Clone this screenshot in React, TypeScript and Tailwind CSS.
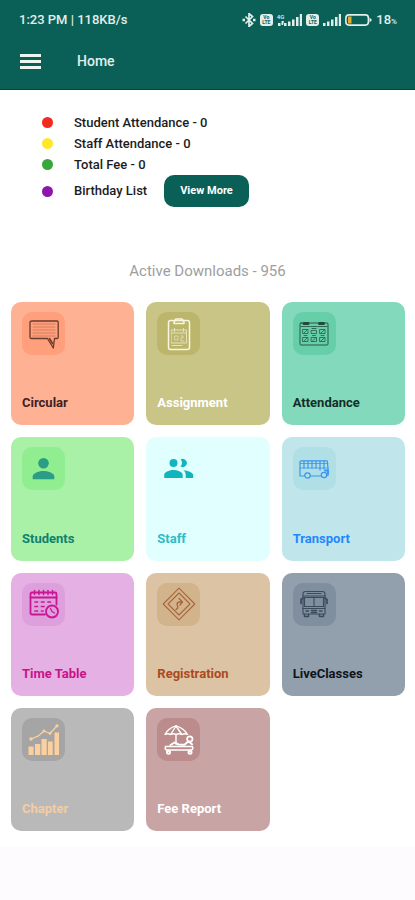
import type { ReactNode } from 'react';

const line = {
  fill: 'none',
  stroke: 'currentColor',
  strokeLinecap: 'round',
  strokeLinejoin: 'round',
} as const;

function Icon({ children, width = 1 }: { children: ReactNode; width?: number }) {
  return (
    <svg viewBox="0 0 30 30" className="size-[30px] overflow-visible" aria-hidden="true" {...line} strokeWidth={width}>
      {children}
    </svg>
  );
}

const circularIcon = (
  <Icon>
    <path d="M3 2h25q1.200 0 1.200 1.200v15q0 1.300-1.200 1.300h-2.500l-1.200 9.500-5.800-9.500H2.500Q1 19.500 1 18V3.500Q1 2 3 2z" strokeWidth="1.300" />
    <path d="M4 5h22M4 8h22M4 11h22M4 14h22M4 17h22" strokeWidth=".5" opacity=".6" />
    <path d="M20.500 19.500l3 5" strokeWidth="1.500" />
  </Icon>
);

const assignmentIcon = (
  <Icon width={1.5}>
    <rect x="4.500" y="1.500" width="21" height="29" rx="2" />
    <path d="M10 3L12 0h6l2 3v1.500H10z" />
    <g opacity=".7">
      <path d="M7.500 11h15v13h-15zM7.500 14h15M10.500 9.500v3M19.500 9.500v3" strokeWidth="1" />
      <path d="M11 17h3v4h-3zM17 17h2v2h-2v3h3" strokeWidth=".8" />
      <path d="M8 26.500h10" strokeWidth="1" />
    </g>
  </Icon>
);

const attendanceIcon = (
  <Icon width={0.9}>
    <rect x="1" y="4" width="28" height="22" rx="1" />
    <path d="M5 4.500h4M20.500 4.500h4" strokeWidth="3" />
    <path d="M2 7.500h9M19 7.500h9M12 7.500h6M13 9.500h4" strokeWidth=".8" />
    <path
      d="M4 10.500h5v4H4zM4 18.500h5v4H4zM12.500 11.500h5v3h-5zM12.500 18.500h5v4h-5zM21 10.500h5v4h-5zM21 18.500h5v4h-5zM5 14l3-3M5 22l3-3M13.500 22l3-3M22 14l3-3M22 22l3-3M5 16.500h3M13.500 16.500h3M22 16.500h3"
      strokeWidth=".7"
    />
  </Icon>
);

const studentIcon = (
  <Icon>
    <g fill="currentColor" stroke="none">
      <circle cx="14.500" cy="9.300" r="5.300" />
      <path d="M3.700 25.300v-2.700c0-3.700 7.200-5.500 10.800-5.500s10.800 1.800 10.800 5.500v2.700z" />
    </g>
  </Icon>
);

const staffIcon = (
  <Icon>
    <g fill="currentColor" stroke="none">
      <circle cx="9.500" cy="9" r="4" />
      <path d="M.2 24v-3c0-3.200 6-5 9.300-5s9.200 1.800 9.200 5v3z" />
      <path d="M16.700 12.400a5.500 5.500 0 0 0 0-6.800 4 4 0 1 1 0 6.800z" />
      <path d="M19.500 16.200c4 .3 9.700 2 9.700 4.800v3h-7.500v-3c0-2-.8-3.600-2.200-4.800z" />
    </g>
  </Icon>
);

const transportIcon = (
  <Icon width={1.2}>
    <path d="M5.500 22H1V8q0-1.200 1.200-1.200h26L29 14v7.500h-1.500M11.500 22h11" />
    <path d="M1 14h28M1 9.500h28" strokeWidth=".8" />
    <path d="M5 7v7M9 7v7M13 7v7M17 7v7M21 7v9M25 7v8" />
    <circle cx="8.500" cy="21.500" r="2.700" />
    <circle cx="25" cy="21" r="2.700" />
    <path d="M26 16.500h3v3" strokeWidth="1.800" />
  </Icon>
);

const timeTableIcon = (
  <Icon width={1.8}>
    <path d="M16 25.500H3q-1.500 0-1.500-1.500V5Q1.500 3.500 3 3.500h23q1.500 0 1.500 1.500v10.500" />
    <path d="M1.500 8.500h26" />
    <path d="M5.500 1.500v4M10 1.500v4M14.500 1.500v4M19 1.500v4M23.500 1.500v4" strokeWidth="1.500" />
    <path d="M6 13h2.500M12.500 13H15M19 13h2.500M6 17.500h2.500M12.500 17.500H15M6 22h2.500M12.500 22h1.500" strokeWidth="1.700" />
    <circle cx="23" cy="22.500" r="6" />
    <path d="M21.500 19.500l1.500 3 2.500 1.500" strokeWidth="1.200" />
  </Icon>
);

const registrationIcon = (
  <Icon width={1.1}>
    <path d="M15-.8L30.800 15 15 30.800-.8 15z" />
    <path d="M15 4L26 15 15 26 4 15z" />
    <path d="M12 20.500q3-2 1-5 0-2.500 3-2.500h2.500M15 9.500l3.500 3.500-2.500 3" strokeWidth="1.300" />
  </Icon>
);

const liveClassesIcon = (
  <Icon width={1.1}>
    <path d="M4 25V5q0-2.500 2.500-2.500h17Q26 2.500 26 5v20zM8 4.500h14" />
    <path d="M4 7h22M5.500 8.500h19v9h-19zM15 8.500v9M4 19.500h22" />
    <path d="M4 9L2 10.500V14M26 9l2 1.500V14M2 12v2.500M28 12v2.500" strokeWidth="1.700" />
    <path d="M7 22h2.500M20.500 22H23M12.500 21.500h5M12.500 23.500h5" strokeWidth="1.500" />
    <path d="M5.500 25.500v2h4v-2M20.500 25.500v2h4v-2" strokeWidth="1.500" />
  </Icon>
);

const chapterIcon = (
  <Icon width={1.3}>
    <g fill="currentColor" stroke="none">
      <path d="M-.5 21.500h5V30h-5zM6 19h5.200v11H6zM12.500 14h5.200v16h-5.200zM19 16.500h4.700V30H19zM25.500 7.500H30V30h-4.500z" />
      <circle cx="2" cy="14" r="1.700" />
      <circle cx="15" cy="6" r="1.400" />
      <circle cx="21" cy="8.500" r="1.400" />
      <circle cx="28" cy=".8" r="1.600" />
    </g>
    <path d="M2 14l7-2.800 6-5.200 6 2.500 7-7.700" />
  </Icon>
);

const feeReportIcon = (
  <Icon width={1.4}>
    <path d="M1 9.500Q4 3 12 .8q8 2.200 11.500 8.700-2.800-1.500-5.500 0-3-1.500-6 0-2.800-1.500-5.500 0Q3.500 8 1 9.500z" />
    <path d="M12 1L7 9M12 1l5.500 8M12 9.500V19" />
    <path d="M1.500 21.500h27q1 2.500-1 3.500h-25q-2-1-1-3.500z" />
    <path d="M6.500 20l4-2.500 4 2 6 .3 4-3.500 3.500 3" strokeWidth="2" />
    <circle cx="25.800" cy="14" r="2.700" strokeWidth="1.700" />
    <circle cx="4.500" cy="27.200" r="1.500" strokeWidth="2" />
    <circle cx="26" cy="27.200" r="1.500" strokeWidth="2" />
  </Icon>
);

const tiles = [
  { name: 'Circular', card: 'bg-[#ffb193]', badge: 'bg-[#ff9f7b]', ink: 'text-[#6a3a2c]', label: 'text-[#3c2226]', icon: circularIcon },
  { name: 'Assignment', card: 'bg-[#c9c587]', badge: 'bg-[#bbb66b]', ink: 'text-[#f8f6df]', label: 'text-white', icon: assignmentIcon },
  { name: 'Attendance', card: 'bg-[#83d9bb]', badge: 'bg-[#66cfaa]', ink: 'text-[#1f4a3c]', label: 'text-[#132f28]', icon: attendanceIcon },
  { name: 'Students', card: 'bg-[#a8f1a6]', badge: 'bg-[#90ee90]', ink: 'text-[#2a9d84]', label: 'text-[#12806e]', icon: studentIcon },
  { name: 'Staff', card: 'bg-[#e2ffff]', badge: 'bg-[#e0ffff]', ink: 'text-[#12b5bd]', label: 'text-[#2cbcc6]', icon: staffIcon },
  { name: 'Transport', card: 'bg-[#c0e5ea]', badge: 'bg-[#b0e0e6]', ink: 'text-[#3b94ee]', label: 'text-[#2288ff]', icon: transportIcon },
  { name: 'Time Table', card: 'bg-[#e5b0e3]', badge: 'bg-[#dda0dd]', ink: 'text-[#cb1694]', label: 'text-[#c71585]', icon: timeTableIcon },
  { name: 'Registration', card: 'bg-[#dcc3a4]', badge: 'bg-[#d2b48c]', ink: 'text-[#a9653c]', label: 'text-[#ab4a20]', icon: registrationIcon },
  { name: 'LiveClasses', card: 'bg-[#92a0ae]', badge: 'bg-[#7f8f9f]', ink: 'text-[#3c4a5c]', label: 'text-[#0e141b]', icon: liveClassesIcon },
  { name: 'Chapter', card: 'bg-[#b9b9b9]', badge: 'bg-[#a5a5a5]', ink: 'text-[#fccf9f]', label: 'text-[#f3cda3]', icon: chapterIcon },
  { name: 'Fee Report', card: 'bg-[#c9a4a4]', badge: 'bg-[#bc8b8b]', ink: 'text-white', label: 'text-white', icon: feeReportIcon },
];

const stats = [
  { text: 'Student Attendance - 0', dot: 'bg-[#f22a20]' },
  { text: 'Staff Attendance - 0', dot: 'bg-[#ffe926]' },
  { text: 'Total Fee - 0', dot: 'bg-[#37a63c]' },
];

function Signal() {
  return (
    <svg viewBox="0 0 18 12" className="h-3 w-[18px]" fill="currentColor" aria-hidden="true">
      <path d="M0 9h2.500v3H0zM4 7.500h2.500V12H4zM8 5.500h2.500V12H8zM12 3h2.500v9H12zM15.800 0H18v12h-2.200z" />
    </svg>
  );
}

function VoLte() {
  return (
    <span className="flex h-3 w-[13px] flex-col items-center justify-center rounded-[3px] bg-[#e2eeeb] text-[5px] leading-[5px] font-bold text-[#0a6056]">
      <span>Vo</span>
      <span>LTE</span>
    </span>
  );
}

function StatusBar() {
  return (
    <div className="flex h-10 items-center justify-between pr-[18px] pl-[19px] text-[13px] font-medium text-[#e2eeeb]">
      <span>1:23 PM | 118KB/s</span>
      <div className="flex items-center gap-1">
        <svg viewBox="0 0 14 14" className="size-[14px]" fill="none" stroke="currentColor" strokeWidth="1.700" aria-hidden="true">
          <path d="M3.500 3.500l7 7L7 13.500V.5l3.500 3-7 7" />
          <path d="M.5 7h2.500M11 7h2.500" strokeWidth="2.500" />
        </svg>
        <VoLte />
        <div className="flex items-end">
          <span className="flex flex-col items-center text-[6px] leading-[6px]">
            <span>4G</span>
            <svg viewBox="0 0 6 6" className="size-[6px]" fill="currentColor" aria-hidden="true">
              <path d="M0 3h2.500v3H0zM3.500 1H6l-1 4H3.500z" />
            </svg>
          </span>
          <Signal />
        </div>
        <VoLte />
        <Signal />
        <svg viewBox="0 0 27 12" className="h-3 w-[27px]" aria-hidden="true">
          <rect x=".9" y=".9" width="22.500" height="10.200" rx="3" fill="none" stroke="currentColor" strokeWidth="1.600" />
          <path d="M3 2.500h3.500v7H3z" fill="#e9a92c" />
          <path d="M24.500 3.500L27 6l-2.500 2.500z" fill="currentColor" />
        </svg>
        <span>
          18<span className="text-[8px]">%</span>
        </span>
      </div>
    </div>
  );
}

export default function App() {
  return (
    <div className="min-h-screen bg-[#fdfbfe] font-['Roboto','Liberation_Sans',sans-serif]">
      <header className="border-b border-[#07463c] bg-[#0a6056] pb-[7px]">
        <StatusBar />
        <div className="flex h-[42px] items-center gap-9 px-5">
          <button type="button" aria-label="Menu" className="flex flex-col gap-[3px]">
            <span className="h-[3px] w-[21px] bg-[#eef6f0]" />
            <span className="h-[3px] w-[21px] bg-[#eef6f0]" />
            <span className="h-[3px] w-[21px] bg-[#eef6f0]" />
          </button>
          <h1 className="text-[14px] font-medium text-[#e2eeeb]">Home</h1>
        </div>
      </header>

      <main className="bg-white pb-4">
        <ul className="px-[42px] pt-[22px] text-[13px] font-medium text-[#1c1c1c]">
          {stats.map((stat) => (
            <li key={stat.text} className="flex h-[21px] items-center gap-[21px]">
              <span className={`size-[11px] rounded-full ${stat.dot}`} />
              {stat.text}
            </li>
          ))}
          <li className="flex items-center gap-[21px]">
            <span className="size-[11px] rounded-full bg-[#8e16ae]" />
            <div className="flex items-center gap-[17px]">
              <span>Birthday List</span>
              <button
                type="button"
                className="h-8 rounded-[10px] bg-[#0a6056] px-4 text-[11px] font-bold text-white"
              >
                View More
              </button>
            </div>
          </li>
        </ul>

        <p className="mt-[54px] text-center text-[15px] leading-5 text-[#9e9e9e]">Active Downloads - 956</p>

        <div className="mt-[21px] grid grid-cols-3 gap-3 pr-[10px] pl-[11px]">
          {tiles.map((tile) => (
            <a
              key={tile.name}
              href="#"
              className={`flex aspect-square flex-col justify-between rounded-[10px] px-[11px] pt-[10px] pb-[14px] ${tile.card}`}
            >
              <span className={`flex size-[43px] items-center justify-center rounded-[10px] ${tile.badge} ${tile.ink}`}>
                {tile.icon}
              </span>
              <span className={`text-[13px] leading-4 font-bold ${tile.label}`}>{tile.name}</span>
            </a>
          ))}
        </div>
      </main>
    </div>
  );
}
